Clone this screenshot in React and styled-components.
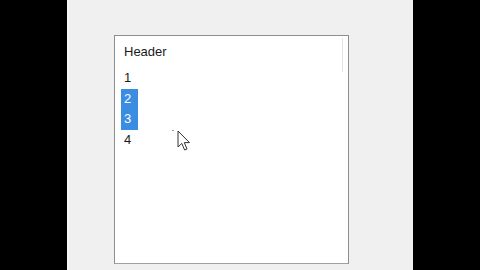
import styled, { createGlobalStyle } from "styled-components";

const Global = createGlobalStyle`
  html, body {
    margin: 0;
    background: #000;
  }
  #root {
    height: 270px;
  }
`;

const Screen = styled.div`
  display: flex;
  width: 480px;
  height: 270px;
  background: #000;
`;

const Side = styled.div`
  width: 67px;
  background: #000;
`;

const Form = styled.div`
  position: relative;
  width: 346px;
  height: 270px;
  box-sizing: border-box;
  padding: 35px 0 0 45px;
  background: #f0f0f0;
  border-left: 2px solid #f7f7f7;
`;

const ListBox = styled.div`
  position: relative;
  width: 235px;
  height: 229px;
  box-sizing: border-box;
  border: 1px solid #8e8e8e;
  border-bottom-color: #a0a0a0;
  background: #fff;
  padding: 6px 0 0 6px;
  font-family: "Liberation Sans", Arial, sans-serif;
  font-size: 13px;
  color: #1a1a1a;
`;

const Ghost = styled.div`
  position: absolute;
  right: 5px;
  top: 2px;
  width: 1px;
  height: 34px;
  background: #e4e4e4;
`;

const Header = styled.div`
  height: 20px;
  line-height: 20px;
  padding-left: 3px;
  margin-bottom: 6px;
`;

const Item = styled.div`
  width: 17px;
  height: 20.7px;
  line-height: 20.7px;
  padding-left: 3px;
  box-sizing: border-box;
  background: ${(p) => (p.$selected ? "#3b8de2" : "transparent")};
  color: ${(p) => (p.$selected ? "#fff" : "#1a1a1a")};
`;

const Cursor = styled.svg`
  position: absolute;
  left: 108px;
  top: 130px;
`;

const Dot = styled.div`
  position: absolute;
  left: 103px;
  top: 130px;
  width: 2px;
  height: 1px;
  background: #9a9a9a;
`;

const items = [
  { label: "1", selected: false },
  { label: "2", selected: true },
  { label: "3", selected: true },
  { label: "4", selected: false },
];

export default function App() {
  return (
    <>
      <Global />
      <Screen>
        <Side />
        <Form>
          <ListBox>
            <Ghost />
            <Header>Header</Header>
            {items.map((it) => (
              <Item key={it.label} $selected={it.selected}>
                {it.label}
              </Item>
            ))}
          </ListBox>
          <Dot />
          <Cursor width="14" height="23" viewBox="0 0 14 23">
            <path
              d="M1 1 L1 17 L4.8 13.4 L7.6 20 L10 19 L7.3 12.6 L12.5 12.6 Z"
              fill="#fff"
              stroke="#333"
              strokeWidth="1"
              strokeLinejoin="round"
            />
          </Cursor>
        </Form>
        <Side />
      </Screen>
    </>
  );
}
